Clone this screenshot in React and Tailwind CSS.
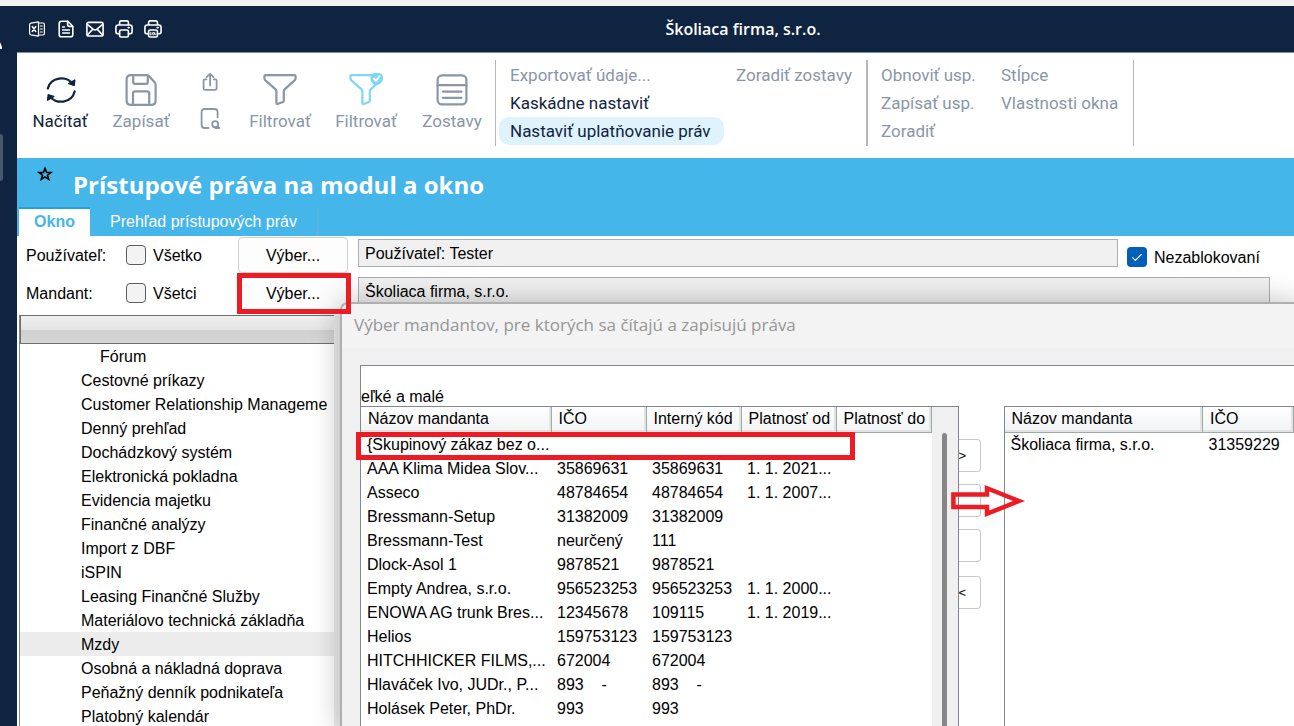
import React from 'react';

const modules = [
  'Cestovné príkazy',
  'Customer Relationship Manageme',
  'Denný prehľad',
  'Dochádzkový systém',
  'Elektronická pokladna',
  'Evidencia majetku',
  'Finančné analýzy',
  'Import z DBF',
  'iSPIN',
  'Leasing Finančné Služby',
  'Materiálovo technická základňa',
  'Mzdy',
  'Osobná a nákladná doprava',
  'Peňažný denník podnikateľa',
  'Platobný kalendár',
];

const companies = [
  ['{Skupinový zákaz bez o...', '', '', ''],
  ['AAA Klima Midea Slov...', '35869631', '35869631', '1. 1. 2021...'],
  ['Asseco', '48784654', '48784654', '1. 1. 2007...'],
  ['Bressmann-Setup', '31382009', '31382009', ''],
  ['Bressmann-Test', 'neurčený', '111', ''],
  ['Dlock-Asol 1', '9878521', '9878521', ''],
  ['Empty Andrea, s.r.o.', '956523253', '956523253', '1. 1. 2000...'],
  ['ENOWA AG trunk Bres...', '12345678', '109115', '1. 1. 2019...'],
  ['Helios', '159753123', '159753123', ''],
  ['HITCHHICKER FILMS,...', '672004', '672004', ''],
  ['Hlaváček Ivo, JUDr., P...', '893    -', '893    -', ''],
  ['Holásek Peter, PhDr.', '993', '993', ''],
];

function Svg({ size, box = 24, width = 2, className = '', children }) {
  return (
    <svg
      width={size}
      height={size}
      viewBox={`0 0 ${box} ${box}`}
      fill="none"
      stroke="currentColor"
      strokeWidth={width}
      strokeLinecap="round"
      strokeLinejoin="round"
      className={className}
      aria-hidden="true"
    >
      {children}
    </svg>
  );
}

const ExcelIcon = () => (
  <Svg size={18} box={18} width={1.2}>
    <path d="M10.5 1.8 3 3.2Q1.6 3.5 1.6 4.8V13.2Q1.6 14.5 3 14.8L10.5 16.2Z" />
    <path d="M10.5 3H15Q16.4 3 16.4 4.4V13.6Q16.4 15 15 15H10.5M12.3 6H14.3M12.3 9H14.3M12.3 12H14.3" />
    <path d="M4.3 6.6 7.7 11.4M7.7 6.6 4.3 11.4" strokeWidth="1.6" />
  </Svg>
);

const DocumentIcon = () => (
  <Svg size={18} box={18} width={1.6}>
    <path d="M10.8 1.2H4.6Q2.2 1.2 2.2 3.6V14.4Q2.2 16.8 4.6 16.8H13.4Q15.8 16.8 15.8 14.4V6.2Z" />
    <path d="M10.6 1.4V4.6Q10.6 6.4 12.4 6.4H15.6M5.6 7H7.4M5.6 10H12.4M5.6 13H12.4" />
  </Svg>
);

const MailIcon = () => (
  <Svg size={18} box={18} width={1.6}>
    <rect x="0.9" y="2.4" width="16.2" height="13.6" rx="1.8" />
    <path d="M1.6 4.6 7.4 9.4Q9 10.6 10.6 9.4L16.4 4.6M1.6 14.8 6.4 9.6M16.4 14.8 11.6 9.6" />
  </Svg>
);

const PrinterIcon = ({ preview }) => (
  <Svg size={18} box={18} width={1.6}>
    <path d="M4.6 4.6V2.6Q4.6 .9 6.3 .9H11.7Q13.4 .9 13.4 2.6V4.6M4.6 13.8H3.4Q.9 13.8 .9 11.4V7.4Q.9 5 3.4 5H14.6Q17.1 5 17.1 7.4V11.4Q17.1 13.8 14.6 13.8H13.4" />
    <rect x="4.6" y="10" width="8.8" height="7" rx="1.6" />
    <path d="M13.2 7.6H14.2" />
    {preview && (
      <g strokeWidth="1">
        <path d="M6.8 12.4V15M8 14.4 9.8 12.4 11.4 14.8" />
        <circle cx="9.6" cy="13.6" r="1.2" />
      </g>
    )}
  </Svg>
);

const RefreshIcon = () => (
  <Svg size={34} box={34} width={2.3}>
    <path d="M4.8 15.4A13.8 12.6 0 0 1 30 11.4M31.6 18.4A13.8 12.6 0 0 1 6.2 22.6" />
    <path d="M31.8 7 31.2 12.4 25.6 10.6ZM4.6 27.2 5.2 21.8 10.8 23.4Z" fill="currentColor" strokeWidth="1.4" />
  </Svg>
);

const SaveIcon = () => (
  <Svg size={32} box={32} width={2.2}>
    <path d="M6 1.2H21.6Q23.2 1.2 24.4 2.4L29.4 8Q30.6 9.4 30.6 11V26.4Q30.6 30.8 26.2 30.8H6Q1.6 30.8 1.6 26.4V5.6Q1.6 1.2 6 1.2Z" />
    <path d="M8.2 1.4V8Q8.2 9.8 10 9.8H21Q22.8 9.8 22.8 8V1.6M8 30.6V19.6Q8 17.4 10.2 17.4H22Q24.2 17.4 24.2 19.6V30.6" />
  </Svg>
);

const ShareIcon = () => (
  <Svg size={18} box={18} width={1.8}>
    <path d="M5.4 6.4H3.8Q2.6 6.4 2.6 7.6V15.6Q2.6 16.8 3.8 16.8H14.4Q15.6 16.8 15.6 15.6V7.6Q15.6 6.4 14.4 6.4H12.8M9.1 12.4V1M5.6 4.2 9.1 .9 12.6 4.2" />
  </Svg>
);

const PreviewIcon = () => (
  <Svg size={21} box={21} width={1.8}>
    <path d="M8.4 20H4.6Q1.6 20 1.6 17V4Q1.6 1 4.6 1H14.6Q17.6 1 17.6 4V9.4" />
    <circle cx="15.2" cy="16.2" r="3" />
    <path d="M17.4 18.4 19.4 20H15.4" />
  </Svg>
);

const FilterIcon = ({ checked }) => (
  <Svg size={34} box={34} width={2.2}>
    <path d="M2.6 2.2H31.4Q32.6 2.2 32.6 3.4V5.2Q32.6 6.4 31.6 7.4L21.6 16.4Q20.8 17.2 20.8 18.4V27.4Q20.8 28.6 19.8 29L14.6 31Q13.4 31.4 13.4 30V18.4Q13.4 17.2 12.6 16.4L2.4 7.4Q1.4 6.4 1.4 5.2V3.4Q1.4 2.2 2.6 2.2Z" />
    {checked && (
      <g>
        <circle cx="27.6" cy="5.6" r="5.2" fill="currentColor" />
        <path d="M25 5.8 27 7.8 30.4 3.4" stroke="white" strokeWidth="2" />
      </g>
    )}
  </Svg>
);

const ReportsIcon = () => (
  <Svg size={32} box={32} width={2.2}>
    <rect x="1.6" y="1.4" width="28.8" height="29" rx="4.4" />
    <path d="M1.6 11.2H30.4M7 17.6H25.4M7 23.8H25.4" />
  </Svg>
);

function Tool({ label, icon, className }) {
  return (
    <button type="button" className={`flex flex-col items-center pt-[19px] ${className}`}>
      <span className="flex h-9 items-center">{icon}</span>
      <span className="mt-[3px] leading-5">{label}</span>
    </button>
  );
}

function Command({ label, className = '' }) {
  return (
    <button type="button" className={`block h-7 pt-[2px] whitespace-nowrap text-left ${className}`}>
      {label}
    </button>
  );
}

function Check({ id, label, className = '' }) {
  return (
    <div className={`flex shrink-0 items-center gap-[7px] ${className}`}>
      <input id={id} type="checkbox" className="size-5 appearance-none rounded border border-[#5c5c5c] bg-[#f3f3f3]" />
      <label htmlFor={id} className="pt-[2px]">{label}</label>
    </div>
  );
}

const pickButton =
  'h-9 w-[110px] shrink-0 rounded border border-[#cfcfcf] bg-[#fdfdfd] pt-[2px] text-center';

function HeadCell({ children }) {
  return (
    <th className="h-[25px] border-r border-b border-[#9aabaa] bg-linear-to-b from-white to-[#f1f2f3] pl-[7px] text-left font-normal shadow-[inset_-2px_-2px_0_#e2e2e2]">
      {children}
    </th>
  );
}

function Transfer({ label, children, className = '' }) {
  return (
    <button
      type="button"
      aria-label={label}
      className={`block h-[33px] w-[22px] overflow-hidden rounded-r border border-l-0 border-[#c8c8c8] bg-white text-left text-[13px] ${className}`}
    >
      {children}
    </button>
  );
}

function CompanyDialog() {
  return (
    <section
      role="dialog"
      aria-labelledby="dialog-title"
      className="absolute top-[66px] right-0 bottom-0 left-[323px] flex flex-col rounded-tl-lg border-t-2 border-l-2 border-[#afafaf] bg-[#f0f0f0] shadow-[0_0_26px_4px_rgba(0,0,0,0.2)]"
    >
      <h2
        id="dialog-title"
        className="h-11 shrink-0 rounded-tl-lg bg-[#f3f3f3] pl-3 font-['Open_Sans',sans-serif] text-[17px] leading-[42px] whitespace-nowrap text-[#969696]"
      >
        Výber mandantov, pre ktorých sa čítajú a zapisujú práva
      </h2>
      <div className="mt-[17px] ml-[18px] flex min-h-0 flex-1 flex-col border-t border-l border-[#828790] bg-white">
        <p className="mt-5 h-5 leading-[22px]">eľké a malé</p>
        <div className="flex min-h-0 flex-1">
          <div className="flex shrink-0 overflow-hidden border-t border-r border-[#828790]">
            <table className="h-fit w-[570px] table-fixed border-collapse whitespace-pre">
              <colgroup>
                <col className="w-[190px]" />
                <col className="w-[95px]" />
                <col className="w-[95px]" />
                <col className="w-[95px]" />
                <col className="w-[95px]" />
              </colgroup>
              <thead>
                <tr>
                  <HeadCell>Názov mandanta</HeadCell>
                  <HeadCell>IČO</HeadCell>
                  <HeadCell>Interný kód</HeadCell>
                  <HeadCell>Platnosť od</HeadCell>
                  <HeadCell>Platnosť do</HeadCell>
                </tr>
              </thead>
              <tbody>
                {companies.map((row) => (
                  <tr key={row[0]} className="h-6">
                    {row.map((cell, i) => (
                      <td key={i} className="p-0 pl-[6px] leading-6">
                        {cell}
                      </td>
                    ))}
                    <td />
                  </tr>
                ))}
              </tbody>
            </table>
            <div className="flex w-[26px] justify-center bg-[#f0f0f0] pt-[26px]">
              <div className="w-[5px] rounded-t-full bg-[#868686]" />
            </div>
          </div>
          <div className="w-[45px] shrink-0 pt-[33px]">
            <Transfer label="Pridať všetky">&gt;</Transfer>
            <Transfer label="Pridať" className="mt-3" />
            <Transfer label="Odobrať" className="mt-3" />
            <Transfer label="Odobrať všetky" className="mt-[14px]">&lt;</Transfer>
          </div>
          <div className="min-w-0 flex-1 overflow-hidden border-t border-l border-[#828790]">
            <table className="w-full table-fixed border-collapse whitespace-nowrap">
              <colgroup>
                <col className="w-[198px]" />
                <col />
              </colgroup>
              <thead>
                <tr>
                  <HeadCell>Názov mandanta</HeadCell>
                  <HeadCell>IČO</HeadCell>
                </tr>
              </thead>
              <tbody>
                <tr className="h-6">
                  <td className="p-0 pl-[6px] leading-6">Školiaca firma, s.r.o.</td>
                  <td className="p-0 pl-[6px] leading-6">31359229</td>
                </tr>
              </tbody>
            </table>
          </div>
        </div>
      </div>
    </section>
  );
}

export default function App() {
  return (
    <div className="flex h-screen flex-col overflow-hidden bg-white font-['Liberation_Sans',Arial,sans-serif] text-base text-black">
      <div className="h-[6px] shrink-0 bg-[#f2f2f2]" />
      <header className="grid h-[46px] shrink-0 grid-cols-[1fr_auto_1fr] items-center bg-[#0f2441] text-white">
        <div className="flex items-center gap-[11px] pl-7">
          <button type="button" aria-label="Excel"><ExcelIcon /></button>
          <button type="button" aria-label="Dokument"><DocumentIcon /></button>
          <button type="button" aria-label="E-mail"><MailIcon /></button>
          <button type="button" aria-label="Tlač"><PrinterIcon /></button>
          <button type="button" aria-label="Náhľad tlače"><PrinterIcon preview /></button>
        </div>
        <h1 className="pl-48 font-['Open_Sans',sans-serif] text-base font-semibold">Školiaca firma, s.r.o.</h1>
      </header>

      <div className="flex min-h-0 flex-1">
        <aside className="relative w-[17px] shrink-0 bg-[#0f2441]">
          <svg className="absolute -top-[11px] left-0" width="4" height="10" viewBox="0 0 4 10" fill="white" aria-hidden="true">
            <path d="M0 1 2 6 2 8H0Z" />
          </svg>
          <div className="mt-[82px] h-[47px] w-[3px] rounded-r bg-[#4a586e]" />
        </aside>

        <main className="flex min-w-0 flex-1 flex-col">
          <nav className="flex h-[106px] shrink-0 border-t border-[#7f8b9e] font-['Roboto',sans-serif] text-[17px] text-[#8996a8]">
            <Tool label="Načítať" icon={<RefreshIcon />} className="w-[86px] text-[#0f2441]" />
            <Tool label="Zapísať" icon={<SaveIcon />} className="w-[76px]" />
            <div className="flex w-[58px] flex-col items-center gap-[17px] pl-1 pt-5">
              <button type="button" aria-label="Zdieľať"><ShareIcon /></button>
              <button type="button" aria-label="Ukážka"><PreviewIcon /></button>
            </div>
            <Tool label="Filtrovať" icon={<FilterIcon />} className="w-[86px]" />
            <Tool
              label="Filtrovať"
              icon={<span className="text-[#7fd6f7]"><FilterIcon checked /></span>}
              className="w-[86px]"
            />
            <Tool label="Zostavy" icon={<ReportsIcon />} className="w-[86px]" />
            <div className="mt-[7px] flex h-[86px] border-l border-[#b4b6ba] pt-px pl-[3px]">
              <div className="w-[226px]">
                <Command label="Exportovať údaje..." className="pl-[11px]" />
                <Command label="Kaskádne nastaviť" className="pl-[11px] text-[#0f2441]" />
                <Command
                  label="Nastaviť uplatňovanie práv"
                  className="w-[225px] rounded-[10px] bg-[#dff3fd] pl-[11px] text-[#0f2441]"
                />
              </div>
              <div className="w-[141px] pl-[11px]">
                <Command label="Zoradiť zostavy" />
              </div>
            </div>
            <div className="mt-[7px] flex h-[86px] border-r border-l-2 border-r-[#b4b6ba] border-l-[#b4b6ba] pt-px pl-[13px]">
              <div className="w-[120px]">
                <Command label="Obnoviť usp." />
                <Command label="Zapísať usp." />
                <Command label="Zoradiť" />
              </div>
              <div className="w-[132px]">
                <Command label="Stĺpce" />
                <Command label="Vlastnosti okna" />
              </div>
            </div>
          </nav>

          <div className="flex h-[78px] shrink-0 flex-col justify-between bg-[#45b6e9] text-white">
            <div className="flex">
              <button type="button" aria-label="Obľúbené" className="mt-2 ml-5 h-4 text-black">
                <svg width="16" height="16" viewBox="0 0 16 16" fill="none" stroke="currentColor" strokeWidth="1.6" aria-hidden="true">
                  <path d="M8 2.4 9.6 6.5H14L10.5 9.2 11.8 13.4 8 10.9 4.2 13.4 5.5 9.2 2 6.5H6.4Z" />
                </svg>
              </button>
              <h2 className="mt-2 ml-5 font-['Open_Sans',sans-serif] text-2xl leading-[38px] font-bold">
                Prístupové práva na modul a okno
              </h2>
            </div>
            <div role="tablist" className="flex h-[29px] pl-[2px]">
              <button type="button" role="tab" aria-selected="true" className="w-[71px] border-t-2 border-[#22a2dc] bg-white pb-[2px] font-bold text-[#45b6e9]">
                Okno
              </button>
              <button type="button" role="tab" aria-selected="false" className="w-[228px] border-r border-[#6cb0d4]">
                Prehľad prístupových práv
              </button>
            </div>
          </div>

          <div className="relative flex min-h-0 flex-1 flex-col">
            <div className="flex h-[38px] shrink-0 items-center pl-[9px]">
              <span className="w-[100px] shrink-0 pt-[2px]">Používateľ:</span>
              <Check id="all-users" label="Všetko" className="w-[112px]" />
              <button type="button" className={pickButton}>Výber...</button>
              <input
                aria-label="Používateľ"
                readOnly
                value="Používateľ: Tester"
                className="mt-[3px] ml-[10px] h-7 min-w-0 flex-1 self-start border border-[#abadb3] bg-[#f0f0f0] px-[6px] pt-[2px]"
              />
              <div className="ml-[9px] flex w-[167px] shrink-0 items-center gap-[7px] pt-1">
                <span className="relative flex">
                  <input id="unblocked" type="checkbox" defaultChecked className="size-5 appearance-none rounded bg-[#005fb8]" />
                  <svg className="pointer-events-none absolute inset-0" width="20" height="20" viewBox="0 0 20 20" fill="none" stroke="white" strokeWidth="1.2" aria-hidden="true">
                    <path d="M5.4 10.4 8.4 13.4 14.6 7.2" />
                  </svg>
                </span>
                <label htmlFor="unblocked" className="pt-[2px]">Nezablokovaní</label>
              </div>
            </div>
            <div className="flex h-[38px] shrink-0 items-center pl-[9px]">
              <span className="w-[100px] shrink-0 pt-[2px]">Mandant:</span>
              <Check id="all-companies" label="Všetci" className="w-[112px]" />
              <button type="button" className={pickButton}>Výber...</button>
              <input
                aria-label="Mandant"
                readOnly
                value="Školiaca firma, s.r.o."
                className="mt-[3px] mr-6 ml-[10px] h-7 min-w-0 flex-1 self-start border border-[#abadb3] bg-[#f0f0f0] px-[6px] pt-[2px]"
              />
            </div>

            <div className="mt-[3px] ml-[2px] flex min-h-0 flex-1">
              <div className="w-[315px] overflow-hidden border-l border-[#828790] whitespace-nowrap">
                <div className="h-[29px] border border-r-0 border-[#6f6f6f] bg-[linear-gradient(#f0f0f0,#e4e4e4_52%,#d0d0d0_53%,#d6d6d6)]" />
                <ul>
                  <li className="h-6 pl-20 leading-[26px]">Fórum</li>
                  {modules.map((name) => (
                    <li
                      key={name}
                      className={`h-6 pl-[61px] leading-[26px] ${name === 'Mzdy' ? 'bg-[#ececec]' : ''}`}
                    >
                      {name}
                    </li>
                  ))}
                </ul>
              </div>
              <div className="w-[6px] bg-[#ececec]" />
            </div>

            <CompanyDialog />

            <div className="pointer-events-none absolute top-[37px] left-[220px] h-[41px] w-[114px] border-5 border-[#ed1c24]" />
            <div className="pointer-events-none absolute top-[196px] left-[339px] h-7 w-[499px] border-5 border-[#ed1c24]" />
            <svg
              className="pointer-events-none absolute top-[248px] left-[933px]"
              width="76"
              height="34"
              viewBox="0 0 76 34"
              fill="none"
              stroke="#ed1c24"
              strokeWidth="4.5"
              aria-hidden="true"
            >
              <path d="M3.4 10.4H37V4.2L69 17 37 29.8V23H3.4Z" />
            </svg>
          </div>
        </main>
      </div>
    </div>
  );
}
